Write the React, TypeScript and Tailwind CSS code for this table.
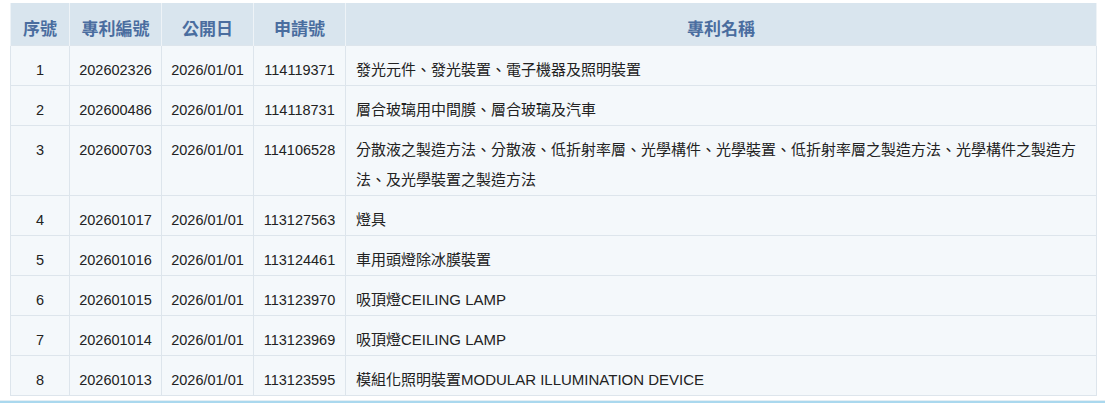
const rows = [
  { no: 1, id: "202602326", date: "2026/01/01", app: "114119371", name: "發光元件、發光裝置、電子機器及照明裝置" },
  { no: 2, id: "202600486", date: "2026/01/01", app: "114118731", name: "層合玻璃用中間膜、層合玻璃及汽車" },
  {
    no: 3,
    id: "202600703",
    date: "2026/01/01",
    app: "114106528",
    name: "分散液之製造方法、分散液、低折射率層、光學構件、光學裝置、低折射率層之製造方法、光學構件之製造方法、及光學裝置之製造方法",
  },
  { no: 4, id: "202601017", date: "2026/01/01", app: "113127563", name: "燈具" },
  { no: 5, id: "202601016", date: "2026/01/01", app: "113124461", name: "車用頭燈除冰膜裝置" },
  { no: 6, id: "202601015", date: "2026/01/01", app: "113123970", name: "吸頂燈CEILING LAMP" },
  { no: 7, id: "202601014", date: "2026/01/01", app: "113123969", name: "吸頂燈CEILING LAMP" },
  { no: 8, id: "202601013", date: "2026/01/01", app: "113123595", name: "模組化照明裝置MODULAR ILLUMINATION DEVICE" },
];

const cell = "border border-[#dde5ec] text-center align-top pt-[9px] leading-[30px] text-[14.5px]";
const head = "border-x border-[#eef3f7] align-top pt-[12px] leading-[30px]";

export default function App() {
  return (
    <div
      className="w-[1105px] h-[403px] bg-white overflow-hidden flex flex-col"
      style={{ fontFamily: '"Liberation Sans", Arial, "Noto Sans CJK TC", sans-serif' }}
    >
      <div className="pt-[3px] pl-[10px] pr-[8px] flex-1">
        <table className="w-[1087px] border-collapse table-fixed text-[#222]">
          <colgroup>
            <col className="w-[59px]" />
            <col className="w-[92px]" />
            <col className="w-[92px]" />
            <col className="w-[92px]" />
            <col />
          </colgroup>
          <thead>
            <tr className="h-[42px] bg-[#d9e5ee] text-[#4a6d9f] text-[17px] font-bold">
              <th className={head}>序號</th>
              <th className={head}>專利編號</th>
              <th className={head}>公開日</th>
              <th className={head}>申請號</th>
              <th className={head}>專利名稱</th>
            </tr>
          </thead>
          <tbody className="bg-[#f4f8fb]">
            {rows.map((r) => (
              <tr key={r.no}>
                <td className={cell}>{r.no}</td>
                <td className={cell}>{r.id}</td>
                <td className={cell}>{r.date}</td>
                <td className={cell}>{r.app}</td>
                <td className="border border-[#dde5ec] text-left align-top px-[10px] pt-[9px] leading-[30px] text-[15px]">
                  {r.name}
                </td>
              </tr>
            ))}
          </tbody>
        </table>
      </div>
      <div className="h-[3px] border-t border-[#e3eef4] bg-[#aad8ee]" />
    </div>
  );
}
